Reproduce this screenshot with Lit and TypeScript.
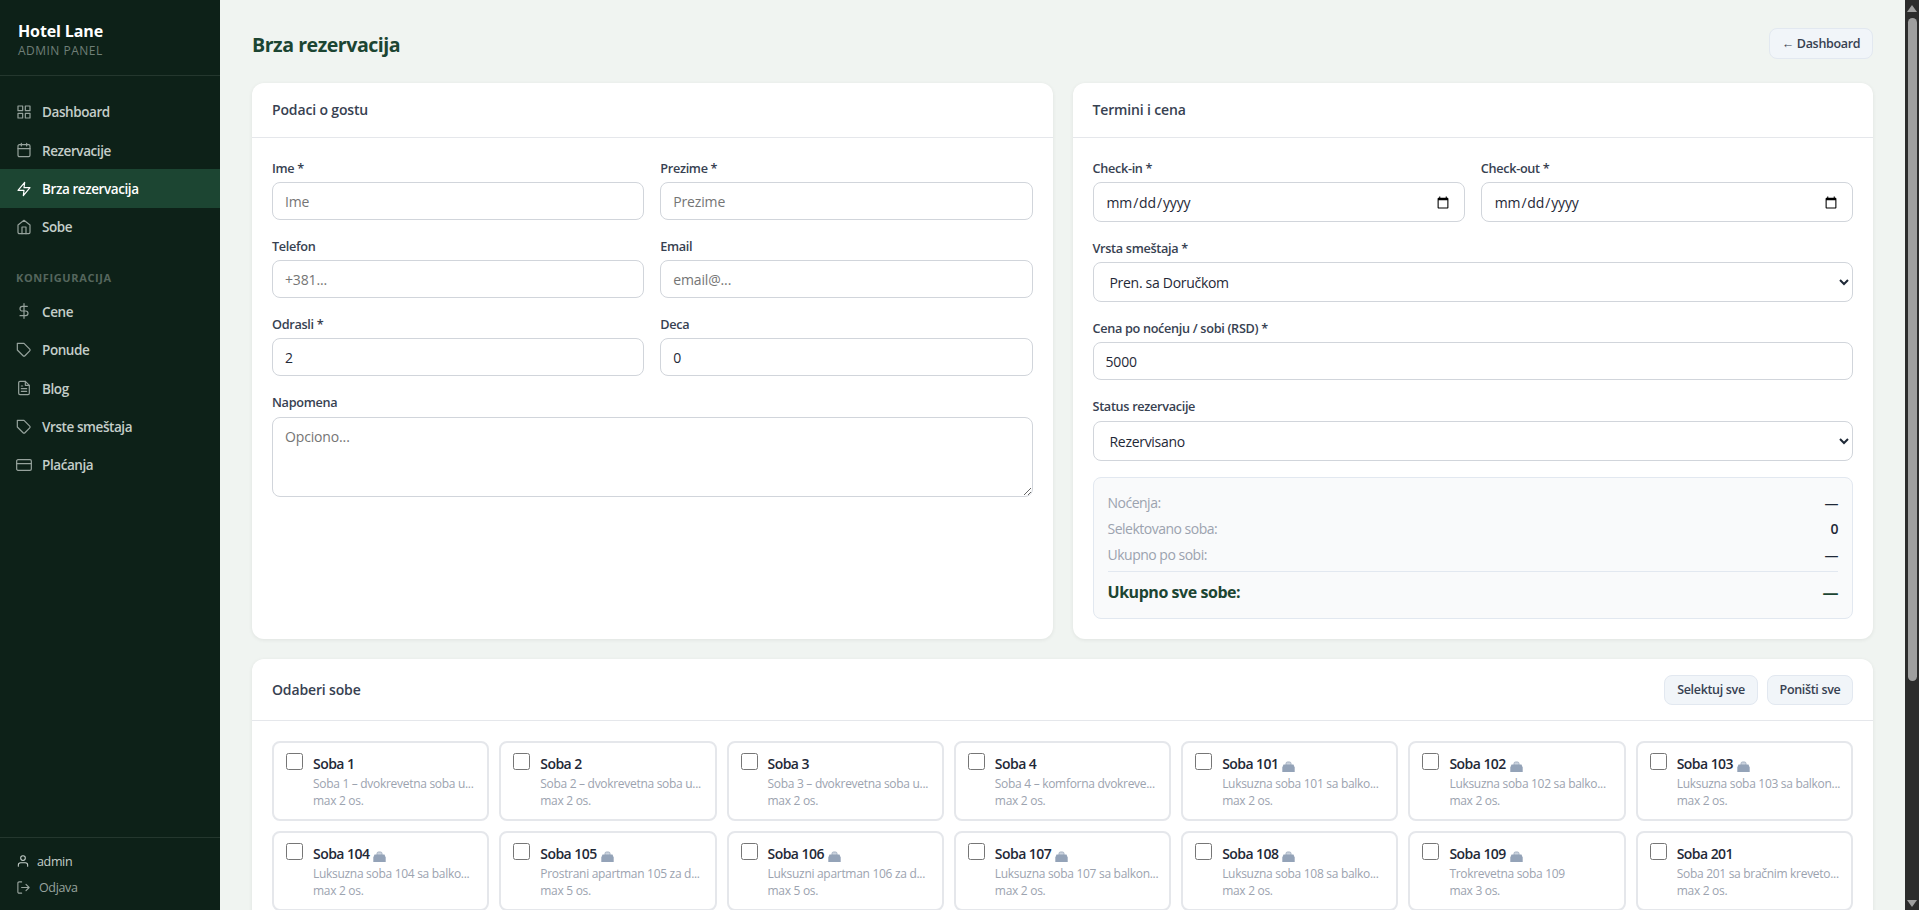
import { LitElement, html, css, svg, nothing } from "lit";
import { customElement } from "lit/decorators.js";

const icons: Record<string, unknown> = {
  grid: svg`<rect x="3" y="3" width="7" height="7"/><rect x="14" y="3" width="7" height="7"/><rect x="14" y="14" width="7" height="7"/><rect x="3" y="14" width="7" height="7"/>`,
  calendar: svg`<rect x="3" y="4" width="18" height="18" rx="2"/><path d="M16 2v4M8 2v4M3 10h18"/>`,
  bolt: svg`<path d="M13 2 3 14h9l-1 8 10-12h-9z"/>`,
  home: svg`<path d="M3 9l9-7 9 7v11a2 2 0 0 1-2 2H5a2 2 0 0 1-2-2z"/><path d="M9 22V12h6v10"/>`,
  dollar: svg`<path d="M12 1v22M17 5H9.500a3.500 3.500 0 0 0 0 7h5a3.500 3.500 0 0 1 0 7H6"/>`,
  tag: svg`<path d="M20.590 13.410l-7.170 7.170a2 2 0 0 1-2.830 0L2 12V2h10l8.590 8.590a2 2 0 0 1 0 2.820z"/>`,
  file: svg`<path d="M14 2H6a2 2 0 0 0-2 2v16a2 2 0 0 0 2 2h12a2 2 0 0 0 2-2V8z"/><path d="M14 2v6h6M16 13H8M16 17H8M10 9H8"/>`,
  card: svg`<rect x="1" y="4" width="22" height="16" rx="2"/><path d="M1 10h22"/>`,
  user: svg`<path d="M20 21v-2a4 4 0 0 0-4-4H8a4 4 0 0 0-4 4v2"/><circle cx="12" cy="7" r="4"/>`,
  logout: svg`<path d="M9 21H5a2 2 0 0 1-2-2V5a2 2 0 0 1 2-2h4M16 17l5-5-5-5M21 12H9"/>`,
};

const icon = (name: string, size: number) => html`<svg class="icon" width=${size} height=${size} viewBox="0 0 24 24">${icons[name]}</svg>`;

const mainNav = [["grid", "Dashboard"], ["calendar", "Rezervacije"], ["bolt", "Brza rezervacija"], ["home", "Sobe"]];
const configNav = [["dollar", "Cene"], ["tag", "Ponude"], ["file", "Blog"], ["tag", "Vrste smeštaja"], ["card", "Plaćanja"]];

interface Room { name: string; desc: string; max: number; bag?: boolean; }

const rooms: Room[] = [
  { name: "Soba 1", desc: "Soba 1 – dvokrevetna soba u...", max: 2 },
  { name: "Soba 2", desc: "Soba 2 – dvokrevetna soba u...", max: 2 },
  { name: "Soba 3", desc: "Soba 3 – dvokrevetna soba u...", max: 2 },
  { name: "Soba 4", desc: "Soba 4 – komforna dvokreve...", max: 2 },
  { name: "Soba 101", desc: "Luksuzna soba 101 sa balko...", max: 2, bag: true },
  { name: "Soba 102", desc: "Luksuzna soba 102 sa balko...", max: 2, bag: true },
  { name: "Soba 103", desc: "Luksuzna soba 103 sa balkon...", max: 2, bag: true },
  { name: "Soba 104", desc: "Luksuzna soba 104 sa balko...", max: 2, bag: true },
  { name: "Soba 105", desc: "Prostrani apartman 105 za d...", max: 5, bag: true },
  { name: "Soba 106", desc: "Luksuzni apartman 106 za d...", max: 5, bag: true },
  { name: "Soba 107", desc: "Luksuzna soba 107 sa balkon...", max: 2, bag: true },
  { name: "Soba 108", desc: "Luksuzna soba 108 sa balko...", max: 2, bag: true },
  { name: "Soba 109", desc: "Trokrevetna soba 109", max: 3, bag: true },
  { name: "Soba 201", desc: "Soba 201 sa bračnim kreveto...", max: 2 },
];

const field = (label: string, control: unknown, cls = "") => html`<label class="field ${cls}"><span class="label">${label}</span>${control}</label>`;

@customElement("app-root")
export class AppRoot extends LitElement {
  static styles = css`
    :host { display: block; height: 100vh; overflow: hidden; font-family: "Open Sans", "Noto Sans", sans-serif; font-size: 14px; color: #1f2937; background: #f0f4f1; }
    * { box-sizing: border-box; }
    .shell { display: flex; height: 100%; }
    .sidebar { width: 220px; flex: none; display: flex; flex-direction: column; background: #0d2118; color: #c4cec9; }
    .brand { height: 76px; padding: 20px 18px 0; border-bottom: 1px solid #24372e; }
    .brand-name { color: #fff; font-weight: 700; font-size: 16px; line-height: 22px; letter-spacing: -0.12px; }
    .brand-sub { color: #6f7f77; font-size: 12px; line-height: 18px; letter-spacing: 0.48px; }
    .nav { padding-top: 16.600px; flex: 1; }
    .item { height: 38.400px; padding: 0 16px; display: flex; align-items: center; gap: 10px; font-size: 13.500px; font-weight: 600; letter-spacing: -0.42px; }
    .item span { padding-top: 1px; }
    .item .icon { opacity: .75; }
    .item.active { background: #1c4532; color: #fff; }
    .item.active .icon { opacity: 1; }
    .icon { flex: none; fill: none; stroke: currentColor; stroke-width: 1.800; stroke-linecap: round; stroke-linejoin: round; }
    .section { height: 46px; padding: 24px 16px 0; line-height: 16px; font-size: 11px; font-weight: 700; letter-spacing: 0.62px; color: #55665d; }
    .user { height: 73px; border-top: 1px solid #24372e; padding: 10px 16px; font-size: 12.500px; letter-spacing: -0.35px; }
    .user-row { display: flex; align-items: center; gap: 7px; height: 26px; }
    .user-row.out { color: #98a49e; gap: 8px; }
    .main { flex: 1; min-width: 0; padding: 28px 32px 0; overflow: hidden; }
    .top { display: flex; justify-content: space-between; align-items: center; height: 31px; margin-bottom: 24px; }
    .title { margin: 2px 0 0; font-size: 19.600px; font-weight: 700; color: #1c4532; letter-spacing: -0.48px; line-height: 30px; }
    .btn { font: 600 12.500px "Open Sans", sans-serif; letter-spacing: -0.32px; color: #374151; background: #f1f5f9; border: 1px solid #e2e8f0; border-radius: 8px; height: 30px; padding: 0; white-space: nowrap; }
    .btn.back { width: 104px; height: 31px; }
    .btn.all { width: 94px; }
    .btn.none { width: 86px; }
    .cards { display: grid; grid-template-columns: 1fr 1fr; gap: 20px; height: 556px; margin-bottom: 20px; }
    .card { background: #fff; border-radius: 12px; box-shadow: 0 1px 4px rgba(0, 0, 0, .07); }
    .card-head { height: 55px; padding: 0 20px 1px; border-bottom: 1px solid #e5e7eb; display: flex; align-items: center; justify-content: space-between; font-size: 14px; font-weight: 600; color: #374151; letter-spacing: -0.15px; }
    .card-head.tall { height: 62px; padding-bottom: 0; }
    .body { padding: 20px; display: flex; flex-direction: column; gap: 16px; }
    .pair { display: grid; grid-template-columns: 1fr 1fr; gap: 16px; }
    .field { display: block; min-width: 0; }
    .label { display: block; height: 24px; line-height: 20px; font-size: 12.700px; font-weight: 600; color: #374151; letter-spacing: -0.32px; }
    .low .label { height: 25px; }
    .control { display: block; width: 100%; height: 38px; margin: 0; border: 1px solid #d1d5db; border-radius: 8px; padding: 1px 12px 0; font: 14px "Open Sans", sans-serif; color: #1f2937; background: #fff; outline: none; letter-spacing: -0.15px; }
    .control.tall { height: 40px; }
    select.control { padding: 0 12px; letter-spacing: -0.3px; }
    textarea.control { height: 80px; padding: 9px 12px; resize: vertical; }
    .actions { display: flex; gap: 9px; }
    .summary { height: 142px; border: 1px solid #e2e8f0; border-radius: 8px; background: #f9fafb; padding: 12px 14px; font-size: 14px; }
    .line { display: flex; justify-content: space-between; height: 26px; line-height: 26px; color: #9ca3af; letter-spacing: -0.5px; }
    .value { color: #1f2937; font-weight: 600; }
    .total { margin-top: 3px; border-top: 1px solid #e2e8f0; display: flex; justify-content: space-between; padding-top: 7px; line-height: 26px; font-size: 16px; font-weight: 700; color: #1c4532; letter-spacing: -0.45px; }
    .rooms { display: grid; grid-template-columns: repeat(7, minmax(0, 1fr)); gap: 10px; padding: 20px; }
    .room { height: 80px; border: 2px solid #e5e7eb; border-radius: 8px; padding: 10px 12px; display: flex; gap: 10px; }
    .check { width: 17px; height: 17px; margin: 0; flex: none; }
    .room-text { min-width: 0; white-space: nowrap; }
    .room-name { display: flex; align-items: flex-end; gap: 4px; height: 22px; line-height: 22px; font-size: 14px; font-weight: 600; letter-spacing: -0.55px; }
    .bag { margin-bottom: 3px; flex: none; }
    .room-desc { font-size: 12px; line-height: 17px; color: #9ca3af; letter-spacing: -0.3px; }
    .scroll { width: 14px; flex: none; background: #2c2c2c; display: flex; flex-direction: column; align-items: center; padding: 5px 0 3px; }
    .arrow { border: 5px solid transparent; border-top: 0; border-bottom: 7px solid #9f9f9f; }
    .arrow.down { transform: rotate(180deg); }
    .thumb { width: 9px; height: 663px; margin-top: 6px; margin-bottom: auto; border-radius: 5px; background: #9f9f9f; }
  `;

  private navItem([name, label]: string[]) {
    return html`<div class="item ${name === "bolt" ? "active" : ""}">${icon(name, 16)}<span>${label}</span></div>`;
  }

  private room(r: Room) {
    return html`<label class="room"><input class="check" type="checkbox" />
      <div class="room-text">
        <div class="room-name"><span>${r.name}</span>${r.bag
          ? html`<svg class="bag" width="13" height="11" viewBox="0 0 13 11"><path d="M4 4V2.500Q4 1 5.500 1h2Q9 1 9 2.500V4" fill="#cbd3de" stroke="#a5b1c2" stroke-width="1"/><path d="M1.500 3.500h10l1.200 3V11H.300V6.500z" fill="#94a3b8"/></svg>`
          : nothing}</div>
        <div class="room-desc">${r.desc}</div>
        <div class="room-desc">max ${r.max} os.</div>
      </div></label>`;
  }

  render() {
    return html`<div class="shell">
      <aside class="sidebar">
        <div class="brand"><div class="brand-name">Hotel Lane</div><div class="brand-sub">ADMIN PANEL</div></div>
        <nav class="nav">
          ${mainNav.map((n) => this.navItem(n))}
          <div class="section">KONFIGURACIJA</div>
          ${configNav.map((n) => this.navItem(n))}
        </nav>
        <div class="user">
          <div class="user-row">${icon("user", 14)}<span>admin</span></div>
          <div class="user-row out">${icon("logout", 15)}<span>Odjava</span></div>
        </div>
      </aside>
      <main class="main">
        <div class="top"><h1 class="title">Brza rezervacija</h1><button class="btn back">← Dashboard</button></div>
        <div class="cards">
          <section class="card">
            <div class="card-head">Podaci o gostu</div>
            <div class="body">
              <div class="pair">${field("Ime *", html`<input class="control" placeholder="Ime" />`)}${field("Prezime *", html`<input class="control" placeholder="Prezime" />`)}</div>
              <div class="pair">${field("Telefon", html`<input class="control" placeholder="+381..." />`)}${field("Email", html`<input class="control" placeholder="email@..." />`)}</div>
              <div class="pair">${field("Odrasli *", html`<input class="control" type="number" value="2" />`)}${field("Deca", html`<input class="control" type="number" value="0" />`)}</div>
              ${field("Napomena", html`<textarea class="control" placeholder="Opciono..."></textarea>`, "low")}
            </div>
          </section>
          <section class="card">
            <div class="card-head">Termini i cena</div>
            <div class="body">
              <div class="pair">${field("Check-in *", html`<input class="control tall" type="date" />`)}${field("Check-out *", html`<input class="control tall" type="date" />`)}</div>
              ${field("Vrsta smeštaja *", html`<select class="control tall"><option>Pren. sa Doručkom</option></select>`)}
              ${field("Cena po noćenju / sobi (RSD) *", html`<input class="control" type="number" value="5000" />`)}
              ${field("Status rezervacije", html`<select class="control tall"><option>Rezervisano</option></select>`, "low")}
              <div class="summary">
                <div class="line"><span>Noćenja:</span><span class="value">—</span></div>
                <div class="line"><span>Selektovano soba:</span><span class="value">0</span></div>
                <div class="line"><span>Ukupno po sobi:</span><span class="value">—</span></div>
                <div class="total"><span>Ukupno sve sobe:</span><span>—</span></div>
              </div>
            </div>
          </section>
        </div>
        <section class="card">
          <div class="card-head tall">Odaberi sobe<div class="actions"><button class="btn all">Selektuj sve</button><button class="btn none">Poništi sve</button></div></div>
          <div class="rooms">${rooms.map((r) => this.room(r))}</div>
        </section>
      </main>
      <div class="scroll"><div class="arrow"></div><div class="thumb"></div><div class="arrow down"></div></div>
    </div>`;
  }
}
